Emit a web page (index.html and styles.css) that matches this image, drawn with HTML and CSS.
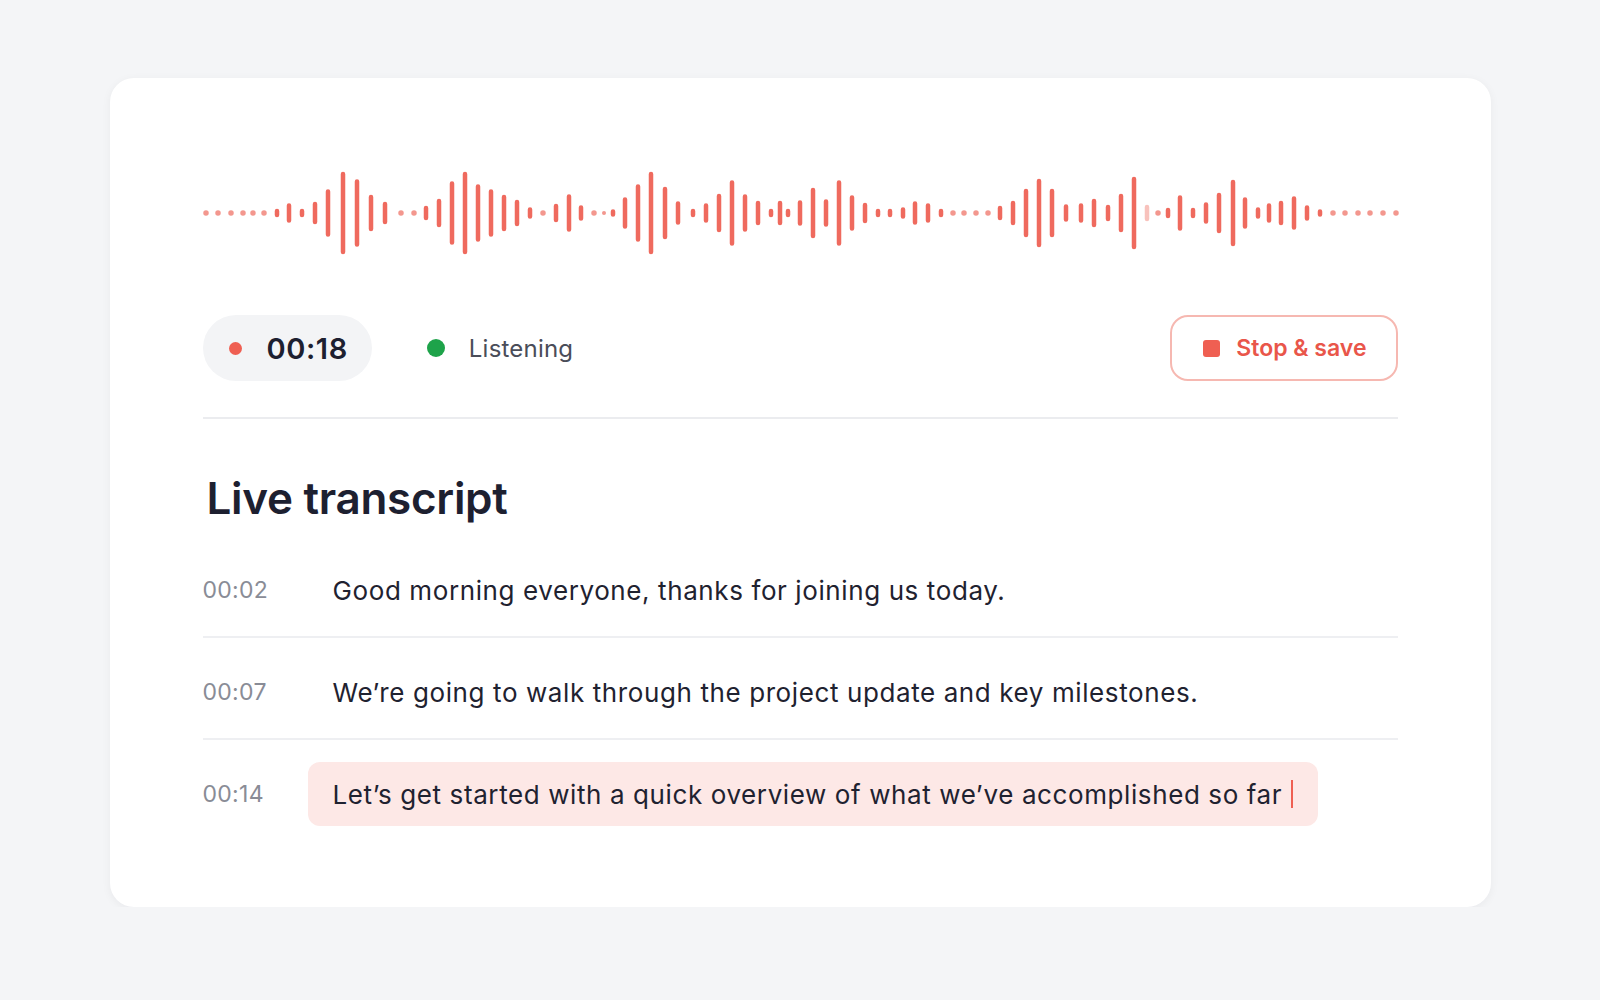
FILE: index.html
```html
<!DOCTYPE html>
<html lang="en">

<head>
    <meta charset="UTF-8">
    <meta name="viewport" content="width=device-width, initial-scale=1.0">
    <link rel="stylesheet" href="styles.css">
    <title>Live transcript</title>
</head>

<body>
    <main class="recorder">

        <svg class="wave" width="1195" height="90" viewBox="0 0 1195 90">
            <path class="wave-dots"
                d="M3 45h0 M15 45h0 M28 45h0 M40 45h0 M50 45h0 M61 45h0 M198 45h0 M211 45h0 M340 45h0 M391 45h0 M750 45h0 M761 45h0 M773 45h0 M785 45h0 M955 45h0 M1130 45h0 M1142 45h0 M1155 45h0 M1167 45h0 M1180 45h0 M1193 45h0" />
            <path class="wave-dot-small" d="M401 45h0" />
            <path class="wave-bars"
                d="M74 43v4 M86 37.5v15 M99 43v4 M112 36v18 M125 23.5v43 M140 6v78 M154 13.5v63 M168 29v32 M182 36v18
                   M223 40v10 M236 33v24 M249 15.5v59 M262 6v78 M275 18.5v53 M288 23.5v43 M301 29v32 M314 34v22 M327 41.5v7
                   M353 38v14 M366 28.5v33 M378 39.5v11
                   M410 43.5v3 M422 31.5v27 M435 18.5v53 M448 6v78 M462 21v48 M475 35.5v19 M490 43v4 M503 37.5v15 M516 28v34
                   M529 14.5v61 M542 28.5v33 M555 35v20 M568 43v4 M577 35v20 M585 43v4 M597 34.5v21 M610 22v46 M623 33.5v23
                   M636 14.5v61 M649 29.5v31 M662 37v16 M675 43v4 M687 43v4 M700 41.5v7 M712 35.5v19 M725 37.5v15 M738 43v4
                   M797 40v10 M810 35v20 M823 23v44 M836 13v64 M849 23v44 M863 38.5v13 M878 37.5v15 M891 33v24 M905 39v12
                   M918 28v34 M931 11v68
                   M965 42v6 M977 29.5v31 M990 42v6 M1003 36.5v17 M1016 27v36 M1030 14v62 M1042 31.5v27 M1055 41.5v7
                   M1066 37.5v15 M1078 35v20 M1091 30.5v29 M1104 39.5v11 M1117 43.5v3" />
            <path class="wave-bars faint" d="M944 39v12" />
        </svg>

        <div class="controls">
            <div class="timer">
                <span class="rec-dot"></span>
                <span class="timer-value">00:18</span>
            </div>
            <div class="status">
                <span class="status-dot"></span>
                <span>Listening</span>
            </div>
            <button class="stop-btn">
                <span class="stop-icon"></span>
                Stop &amp; save
            </button>
        </div>

        <section class="transcript">
            <h2>Live transcript</h2>

            <div class="line">
                <span class="time">00:02</span>
                <p class="text">Good morning everyone, thanks for joining us today.</p>
            </div>
            <div class="line">
                <span class="time">00:07</span>
                <p class="text">We’re going to walk through the project update and key milestones.</p>
            </div>
            <div class="line active">
                <span class="time">00:14</span>
                <p class="text">Let’s get started with a quick overview of what we’ve accomplished so far <span class="caret"></span></p>
            </div>
        </section>

    </main>
</body>

</html>
```

FILE: styles.css
```css
body {
    font-family: 'Inter', 'Noto Sans', sans-serif;
    background-color: #f4f5f7;
    margin: 0;
    padding: 0;
    color: #1f2230;
}

.recorder {
    box-sizing: border-box;
    width: 1381px;
    margin: 78px auto 0;
    padding: 90px 93px 67px;
    background: #fff;
    border-radius: 24px;
    box-shadow: 0 2px 10px rgba(20, 24, 40, 0.05);
}

/* waveform */
.wave {
    display: block;
    overflow: visible;
}

.wave-bars {
    fill: none;
    stroke: #ef6a5e;
    stroke-width: 4.5;
    stroke-linecap: round;
}

.wave-bars.faint {
    stroke: #f8c2bc;
}

.wave-dots {
    fill: none;
    stroke: #f3978e;
    stroke-width: 5.5;
    stroke-linecap: round;
}

.wave-dot-small {
    fill: none;
    stroke: #f3978e;
    stroke-width: 4;
    stroke-linecap: round;
}

/* controls row */
.controls {
    display: flex;
    align-items: center;
    margin-top: 57px;
    padding-bottom: 36px;
    border-bottom: 2px solid #ebecef;
}

.timer {
    display: flex;
    align-items: center;
    gap: 25px;
    height: 66px;
    padding: 0 24px 0 26px;
    background: #f3f4f6;
    border-radius: 33px;
}

.rec-dot {
    width: 13px;
    height: 13px;
    border-radius: 50%;
    background: #ef5f52;
}

.timer-value {
    font-size: 29px;
    font-weight: 600;
    letter-spacing: 0.6px;
    color: #1d2030;
}

.status {
    display: flex;
    align-items: center;
    gap: 24px;
    margin-left: 55px;
    font-size: 24px;
    letter-spacing: 0.2px;
    color: #4a4d59;
}

.status-dot {
    width: 18px;
    height: 18px;
    border-radius: 50%;
    background: #1ea34a;
}

.stop-btn {
    margin-left: auto;
    display: flex;
    align-items: center;
    gap: 16px;
    height: 66px;
    padding: 0 29px 0 31px;
    background: #fff;
    border: 2px solid #f6b8b1;
    border-radius: 18px;
    font-family: inherit;
    font-size: 23px;
    font-weight: 600;
    color: #e9564a;
    cursor: pointer;
}

.stop-icon {
    width: 17px;
    height: 17px;
    border-radius: 3px;
    background: #ef5f52;
}

/* transcript */
.transcript h2 {
    margin: 52px 0 11px 4px;
    font-size: 44px;
    line-height: 54px;
    font-weight: 600;
    letter-spacing: -0.3px;
    color: #1d2030;
}

.line {
    display: flex;
    align-items: center;
    padding: 22px 0 14px;
    border-bottom: 2px solid #eeeff2;
}

.line:last-child {
    border-bottom: none;
}

.time {
    flex-shrink: 0;
    width: 105px;
    font-size: 23px;
    letter-spacing: 0.3px;
    color: #898c96;
}

.text {
    display: flex;
    align-items: center;
    height: 64px;
    margin: 0;
    padding: 0 25px;
    border-radius: 12px;
    font-size: 26px;
    letter-spacing: 0.6px;
    color: #1f2230;
}

.line.active .text {
    background: #fde8e6;
}

.caret {
    display: inline-block;
    width: 2px;
    height: 28px;
    margin-left: 9px;
    background: #ef5f52;
}
```
